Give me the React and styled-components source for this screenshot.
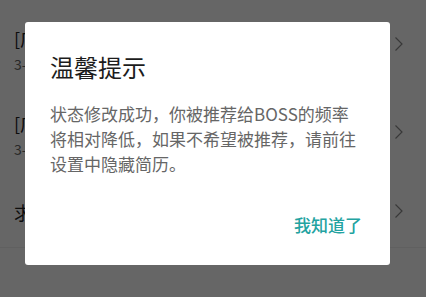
import React from 'react'
import styled, { createGlobalStyle } from 'styled-components'

const GlobalStyle = createGlobalStyle`
  html, body {
    margin: 0;
    padding: 0;
    background: #fff;
    font-family: "Noto Sans CJK SC", "Noto Sans", sans-serif;
  }
`

const Page = styled.div`
  width: 426px;
  height: 297px;
  overflow: hidden;
  background: #fff;
`

const Row = styled.div`
  display: flex;
  align-items: center;
  height: ${({ h }) => h}px;
  padding: 0 22px 0 14px;
  box-sizing: border-box;
  border-bottom: ${({ line }) => (line ? '1px solid #f0f0f0' : 'none')};
`

const RowText = styled.div`
  flex: 1;
  display: flex;
  flex-direction: column;
  gap: 4px;
  padding-top: ${({ shift }) => shift || 0}px;
`

const RowTitle = styled.div`
  font-size: 18px;
  line-height: 24px;
  color: #222;
`

const RowSub = styled.div`
  font-size: 14px;
  line-height: 20px;
  color: #666;
`

const Chevron = styled.svg`
  width: 10px;
  height: 16px;
  flex-shrink: 0;
`

const Overlay = styled.div`
  position: fixed;
  inset: 0;
  background: rgba(0, 0, 0, 0.6);
  display: flex;
  align-items: flex-start;
  padding: 22px 0 0 25px;
`

const Dialog = styled.div`
  width: 365px;
  height: 243px;
  box-sizing: border-box;
  background: #fff;
  border-radius: 3px;
  padding: 28px 25px 0 25px;
  display: flex;
  flex-direction: column;
`

const Title = styled.div`
  font-size: 24px;
  line-height: 34px;
  color: #1c1c1c;
`

const Message = styled.div`
  margin-top: 17px;
  width: 312px;
  font-size: 17px;
  line-height: 25px;
  color: #666;
`

const Actions = styled.div`
  margin-top: 36px;
  display: flex;
  justify-content: flex-end;
  padding-right: 3px;
`

const OkButton = styled.button`
  border: none;
  background: none;
  padding: 0;
  font-family: inherit;
  font-size: 17px;
  line-height: 25px;
  font-weight: 500;
  color: #23a3a1;
  cursor: pointer;
`

const Arrow = () => (
  <Chevron viewBox="0 0 10 16">
    <polyline points="1.5,1.5 8,8 1.5,14.5" fill="none" stroke="#8c8c8c" strokeWidth="1.2" />
  </Chevron>
)

export default function App() {
  return (
    <Page>
      <GlobalStyle />
      <Row h={88}>
        <RowText shift={12}>
          <RowTitle>[广州] 产品经理</RowTitle>
          <RowSub>3-5K · 互联网</RowSub>
        </RowText>
        <Arrow />
      </Row>
      <Row h={87}>
        <RowText shift={6}>
          <RowTitle>[广州] 运营专员</RowTitle>
          <RowSub>3-5K · 电子商务</RowSub>
        </RowText>
        <Arrow />
      </Row>
      <Row h={73} line>
        <RowText shift={2}>
          <RowTitle>求职状态</RowTitle>
        </RowText>
        <Arrow />
      </Row>

      <Overlay>
        <Dialog>
          <Title>温馨提示</Title>
          <Message>
            状态修改成功，你被推荐给BOSS的频率将相对降低，如果不希望被推荐，请前往设置中隐藏简历。
          </Message>
          <Actions>
            <OkButton>我知道了</OkButton>
          </Actions>
        </Dialog>
      </Overlay>
    </Page>
  )
}
